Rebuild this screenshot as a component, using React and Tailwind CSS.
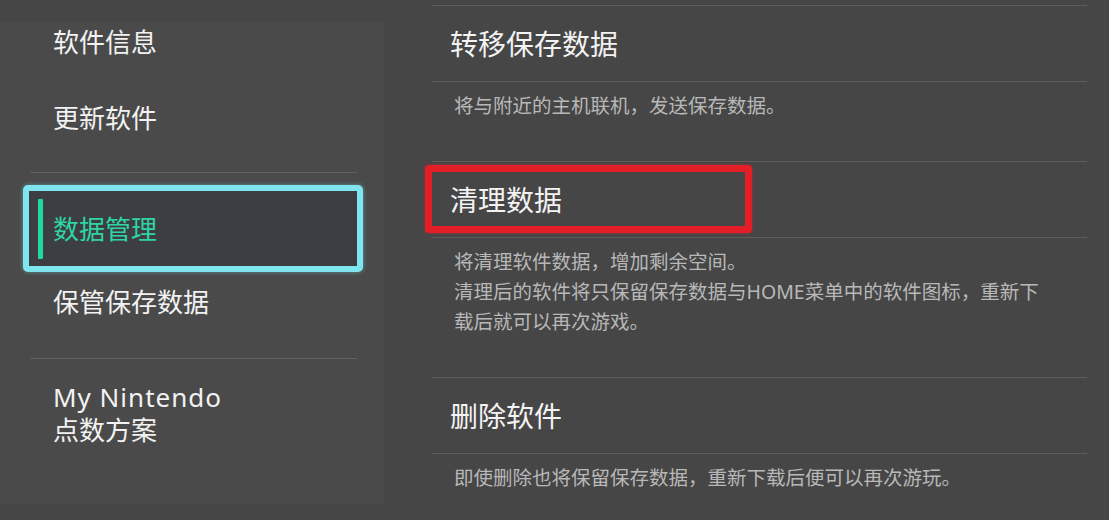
const font = { fontFamily: '"Noto Sans", "Noto Sans CJK SC", sans-serif' };

const sideItems = [
  { label: "软件信息" },
  { label: "更新软件" },
];

const sections = [
  {
    title: "转移保存数据",
    desc: ["将与附近的主机联机，发送保存数据。"],
    descH: "h-[79px]",
  },
  {
    title: "清理数据",
    desc: [
      "将清理软件数据，增加剩余空间。",
      "清理后的软件将只保留保存数据与HOME菜单中的软件图标，重新下",
      "载后就可以再次游戏。",
    ],
    descH: "h-[139px]",
  },
  {
    title: "删除软件",
    desc: ["即使删除也将保留保存数据，重新下载后便可以再次游玩。"],
    descH: "h-[66px]",
  },
];

function Sidebar() {
  return (
    <aside className="w-[384px] mt-[22px] h-[482px] bg-[#4a4a4a] shrink-0 text-[26px] text-[#f2f2f2]">
      <div className="h-[40px] flex items-center pl-[53px] leading-none">{sideItems[0].label}</div>
      <div className="mt-[18px] h-[75px] flex items-center pl-[53px] leading-none">{sideItems[1].label}</div>
      <div className="mt-[17px] mx-[30px] w-[327px] h-px bg-[#606060]" />
      <div className="mt-[12px] ml-[23px] w-[340px] h-[87px] border-[6px] border-[#7fe6ef] rounded-[5px] bg-[#3c3e43] flex items-center shadow-[0_0_4px_rgba(127,230,239,0.5)]">
        <span className="ml-[9px] w-[5px] h-[60px] bg-[#1fd8a4] rounded-[1px]" />
        <span className="ml-[10px] leading-none text-[#2fd4a4]">数据管理</span>
      </div>
      <div className="h-[60px] flex items-center pl-[53px] leading-none">保管保存数据</div>
      <div className="mt-[26px] mx-[30px] w-[327px] h-px bg-[#606060]" />
      <div className="mt-[22px] pl-[53px] leading-[33px]">
        <div className="tracking-[1px]">My Nintendo</div>
        <div>点数方案</div>
      </div>
    </aside>
  );
}

export default function App() {
  return (
    <div className="relative w-[1109px] h-[520px] overflow-hidden bg-[#464646] flex" style={font}>
      <Sidebar />
      <main className="flex-1 pl-[48px] pr-[22px]">
        <div className="mt-[5px] h-px bg-[#5c5c5c]" />
        {sections.map((s) => (
          <div key={s.title}>
            <div className="h-[75px] flex items-center pl-[18px] text-[28px] leading-none text-[#f3f3f3]">{s.title}</div>
            <div className="h-px bg-[#5c5c5c]" />
            <div className={`${s.descH} pt-[9px] pl-[22px] text-[19.5px] leading-[30px] text-[#b8b8b8]`}>
              {s.desc.map((line) => <div key={line} className="whitespace-nowrap">{line}</div>)}
            </div>
            {s.title !== "删除软件" && <div className="h-px bg-[#5c5c5c]" />}
          </div>
        ))}
      </main>
      <div className="absolute left-[425px] top-[165px] w-[327px] h-[68px] border-[7px] border-[#e31e26] rounded-[4px] shadow-[0_0_3px_rgba(227,30,38,0.6)]" />
    </div>
  );
}
